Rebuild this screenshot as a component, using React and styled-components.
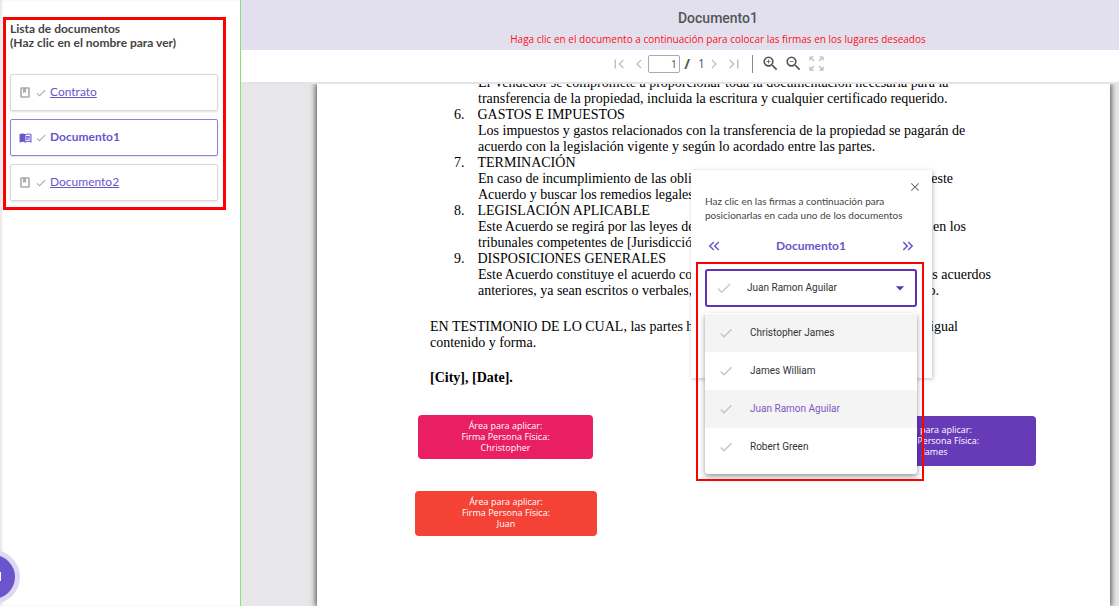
import React from "react";
import styled, { createGlobalStyle } from "styled-components";
import {
  MdFirstPage, MdLastPage, MdChevronLeft, MdChevronRight, MdZoomIn, MdZoomOut,
  MdZoomOutMap, MdCheck, MdClose, MdArrowDropDown, MdKeyboardDoubleArrowLeft,
  MdKeyboardDoubleArrowRight, MdMenuBook,
} from "react-icons/md";

const accent = "#6a55cc";
const deep = "#5e35b1";

const GlobalStyle = createGlobalStyle`
  * { box-sizing: border-box; }
  body { margin: 0; background: #fff; font-family: Lato, "Open Sans", sans-serif; color: #444; }
  button { border: 0; padding: 0; background: none; font: inherit; color: inherit; cursor: pointer; display: flex; align-items: center; justify-content: center; }
  svg { display: block; flex: none; }
`;

const Shell = styled.div`
  display: flex;
  height: 100vh;
  overflow: hidden;
`;

const Sidebar = styled.aside`
  flex: none;
  width: 241px;
  padding: 17px 14px 0 3px;
  border-right: 1px solid #86e07c;
  box-shadow: inset 2px 0 2px #e8e8e8;
`;

const ListFrame = styled.section`
  border: 3px solid #f00;
  padding: 2px 5px 6px 4px;
`;

const ListTitle = styled.h2`
  margin: 0 0 24px;
  font-size: 12px;
  line-height: 14px;
  font-weight: 700;
`;

const DocList = styled.ul`
  list-style: none;
  margin: 0;
  padding: 0;
  display: grid;
  gap: 8px;
`;

const DocCard = styled.li`
  display: flex;
  align-items: center;
  height: 37px;
  padding: 0 8px 2px;
  border: 1px solid ${(p) => (p.$active ? "#8f7fdc" : "#d8d8d8")};
  border-radius: 2px;
  box-shadow: 0 1px 2px rgba(0, 0, 0, 0.12);
  color: ${(p) => (p.$active ? accent : "#aaa")};
`;

const IconSlot = styled.span`
  display: flex;
  justify-content: center;
  width: 12px;
  padding-top: 2px;
`;

const Tick = styled(MdCheck)`
  color: #aaa;
  margin: 2px 3px 0 4px;
`;

const DocLink = styled.a`
  font-size: 12px;
  line-height: 16px;
  color: ${accent};
  font-weight: ${(p) => (p.$active ? 700 : 400)};
  text-decoration: ${(p) => (p.$active ? "none" : "underline")};
`;

const Main = styled.main`
  flex: 1;
  min-width: 0;
  display: flex;
  flex-direction: column;
`;

const Header = styled.header`
  height: 50px;
  padding: 9px 0 0 76px;
  background: #e2e0ef;
  text-align: center;
  font-family: "Open Sans", sans-serif;
  flex: none;
`;

const Title = styled.h1`
  margin: 0 0 4px;
  font: 500 14px/18px Roboto, sans-serif;
  color: #555;
`;

const Notice = styled.p`
  margin: 0;
  font-size: 10px;
  line-height: 16px;
  color: #ff1010;
`;

const Toolbar = styled.div`
  flex: none;
  display: flex;
  align-items: center;
  justify-content: center;
  height: 34px;
  padding: 0 0 5px 76px;
  background: #fff;
  border-bottom: 2px solid #e4e4e6;
  font-family: "Open Sans", sans-serif;
  font-size: 12px;
  color: #555;
`;

const ToolGroup = styled.div`
  display: flex;
  gap: ${(p) => p.$gap}px;
`;

const ToolButton = styled.button`
  width: 18px;
  height: 18px;
  && { color: ${(p) => (p.$dim ? "#c4c4c4" : "#555")}; }
`;

const PageInput = styled.input`
  width: 32px;
  height: 18px;
  padding: 0 2px;
  border: 1px solid #aaa;
  border-radius: 2px;
  font: inherit;
  font-size: 11px;
  color: #555;
  text-align: right;
`;

const Slash = styled.span`
  margin: 0 8px 0 4px;
  font-size: 14px;
  font-weight: 700;
`;

const Divider = styled.span`
  width: 1px;
  height: 18px;
  margin: 0 9px;
  background: #888;
`;

const Viewer = styled.div`
  flex: 1;
  min-height: 0;
  display: flex;
  overflow: hidden;
  padding: 0 9px 0 76px;
  background: #e7e7e9;
`;

const Sheet = styled.article`
  position: relative;
  flex: 1;
  min-width: 793px;
  padding-left: 113px;
  background: #fff;
  box-shadow: 0 0 6px 1px rgba(0, 0, 0, 0.7);
  font-family: "Liberation Serif", "Times New Roman", serif;
  font-size: 14px;
  line-height: 16px;
  color: #000;
`;

const Clauses = styled.ol`
  margin: -9px 0 20px;
  padding-left: 48px;
  list-style: none;
`;

const ClauseHead = styled.div`
  display: flex;
  margin-left: -24px;
  gap: 13px;
`;

const Line = styled.div`
  display: flex;
  justify-content: space-between;
  width: ${(p) => (p.$w ? `${p.$w}px` : "auto")};
  white-space: nowrap;
`;

const Paragraph = styled.div`
  margin-bottom: 19px;
  font-weight: ${(p) => (p.$bold ? 700 : 400)};
`;

const Stamp = styled.div`
  position: absolute;
  left: ${(p) => p.$x}px;
  top: ${(p) => p.$y}px;
  width: ${(p) => p.$w}px;
  height: ${(p) => p.$h}px;
  padding-bottom: 2px;
  display: flex;
  align-items: center;
  justify-content: center;
  text-align: center;
  white-space: pre-line;
  border-radius: 4px;
  background: ${(p) => p.$color};
  color: #fff;
  font: 9px/11px "Open Sans", sans-serif;
`;

const Dialog = styled.section`
  position: absolute;
  left: 374px;
  top: 86px;
  width: 241px;
  height: 208px;
  padding: 10px 15px 0 14px;
  background: #fff;
  box-shadow: 1px 1px 4px rgba(0, 0, 0, 0.25);
  font-family: Lato, sans-serif;
  color: #444;
`;

const CloseRow = styled.div`
  display: flex;
  justify-content: flex-end;
  margin-right: -5px;
  color: #777;
`;

const Help = styled.p`
  margin: 0 0 16px;
  font-size: 10px;
  line-height: 14px;
  white-space: pre-line;
`;

const Switcher = styled.div`
  display: flex;
  align-items: center;
  justify-content: space-between;
  height: 16px;
  margin-bottom: 15px;
  font-size: 12px;
  font-weight: 700;
  color: ${accent};
`;

const Field = styled.div`
  position: relative;
  display: flex;
  align-items: center;
  font-family: Roboto, sans-serif;
  font-size: 10px;
`;

const Select = styled.select`
  appearance: none;
  width: 100%;
  height: 38px;
  padding: 0 24px 0 40px;
  border: 2px solid ${deep};
  border-radius: 3px;
  background: #fff;
  color: #333;
  font: inherit;
`;

const FieldIcon = styled.span`
  position: absolute;
  pointer-events: none;
  ${(p) => (p.$right ? "right: 7px; color: #5e35b1;" : "left: 10px; color: #ccc;")}
`;

const Menu = styled.ul`
  position: absolute;
  top: 44px;
  left: 0;
  right: 0;
  margin: 0;
  padding: 1px 0 8px;
  list-style: none;
  background: #fff;
  border-radius: 0 0 3px 3px;
  box-shadow: 0 2px 4px rgba(0, 0, 0, 0.3), 0 4px 8px rgba(0, 0, 0, 0.14);
`;

const Option = styled.li`
  display: flex;
  align-items: center;
  gap: 16px;
  height: 38px;
  padding-left: 13px;
  background: ${(p) => (p.$shade ? "#f4f4f4" : "#fff")};
  color: ${(p) => (p.$selected ? "#7e57c2" : "#333")};
  svg { color: #c4c4c4; }
`;

const Highlight = styled.div`
  position: absolute;
  top: -7px;
  left: -9px;
  right: -7px;
  height: 219px;
  border: 2px solid #f00;
  pointer-events: none;
`;

const Chat = styled.button`
  position: fixed;
  left: -34px;
  bottom: 2px;
  width: 54px;
  height: 54px;
  && {
    border: 5px solid #ddd8f3;
    border-radius: 50%;
    background: ${accent};
  }
`;

const people = ["Christopher James", "James William", "Juan Ramon Aguilar", "Robert Green"];

// Each line is [start, end, width]; the end part is set flush with the line's width.
const opening = [
  ["El Vendedor se compromete a proporcionar toda la documentación necesaria para la"],
  ["transferencia de la propiedad, incluida la escritura y cualquier certificado requerido."],
];

const clauses = [
  [6, "GASTOS E IMPUESTOS", [
    ["Los impuestos y gastos relacionados con la transferencia de la propiedad se pagarán de"],
    ["acuerdo con la legislación vigente y según lo acordado entre las partes."],
  ]],
  [7, "TERMINACIÓN", [
    ["En caso de incumplimiento de las obli", "este", 475],
    ["Acuerdo y buscar los remedios legales"],
  ]],
  [8, "LEGISLACIÓN APLICABLE", [
    ["Este Acuerdo se regirá por las leyes de", "en los", 488],
    ["tribunales competentes de [Jurisdicción]"],
  ]],
  [9, "DISPOSICIONES GENERALES", [
    ["Este Acuerdo constituye el acuerdo co", "los acuerdos", 513],
    ["anteriores, ya sean escritos o verbales,", "o.", 461],
  ]],
];

const closing = [
  ["EN TESTIMONIO DE LO CUAL, las partes h", "igual", 528],
  ["contenido y forma."],
];

const Lines = ({ items }) =>
  items.map(([start, end, width]) => (
    <Line key={start} $w={width}>
      <span>{start}</span>
      {end && <span>{end}</span>}
    </Line>
  ));

const BookmarkPage = () => (
  <svg width="10" height="11" viewBox="0 0 10 11" fill="none" stroke="currentColor">
    <rect x="1" y="1" width="8" height="9" rx="0.500" strokeWidth="1.6" />
    <path d="M3 1h3v5L4.500 5 3 6z" fill="currentColor" stroke="none" />
  </svg>
);

export default function App() {
  return (
    <>
      <GlobalStyle />
      <Shell>
        <Sidebar>
          <ListFrame>
            <ListTitle>Lista de documentos<br />(Haz clic en el nombre para ver)</ListTitle>
            <DocList>
              {["Contrato", "Documento1", "Documento2"].map((name) => {
                const active = name === "Documento1";
                return (
                  <DocCard key={name} $active={active}>
                    <IconSlot>{active ? <MdMenuBook size={13} /> : <BookmarkPage />}</IconSlot>
                    <Tick size={12} />
                    <DocLink href="#" $active={active}>{name}</DocLink>
                  </DocCard>
                );
              })}
            </DocList>
          </ListFrame>
        </Sidebar>
        <Main>
          <Header>
            <Title>Documento1</Title>
            <Notice>Haga clic en el documento a continuación para colocar las firmas en los lugares deseados</Notice>
          </Header>
          <Toolbar>
            <ToolGroup $gap={2}>
              <ToolButton $dim aria-label="Primera página"><MdFirstPage size={18} /></ToolButton>
              <ToolButton $dim aria-label="Página anterior"><MdChevronLeft size={18} /></ToolButton>
            </ToolGroup>
            <PageInput aria-label="Página" defaultValue="1" />
            <Slash>/</Slash>
            <span>1</span>
            <ToolGroup $gap={2}>
              <ToolButton $dim aria-label="Página siguiente"><MdChevronRight size={18} /></ToolButton>
              <ToolButton $dim aria-label="Última página"><MdLastPage size={18} /></ToolButton>
            </ToolGroup>
            <Divider />
            <ToolGroup $gap={5}>
              <ToolButton aria-label="Acercar"><MdZoomIn size={19} /></ToolButton>
              <ToolButton aria-label="Alejar"><MdZoomOut size={19} /></ToolButton>
              <ToolButton $dim aria-label="Pantalla completa"><MdZoomOutMap size={19} /></ToolButton>
            </ToolGroup>
          </Toolbar>
          <Viewer>
            <Sheet>
              <Clauses>
                <li><Lines items={opening} /></li>
                {clauses.map(([n, head, body]) => (
                  <li key={n}>
                    <ClauseHead><span>{n}.</span><span>{head}</span></ClauseHead>
                    <Lines items={body} />
                  </li>
                ))}
              </Clauses>
              <Paragraph><Lines items={closing} /></Paragraph>
              <Paragraph $bold>[City], [Date].</Paragraph>
              <Stamp $x={101} $y={331} $w={175} $h={44} $color="#e91e63">{"Área para aplicar:\nFirma Persona Física:\nChristopher"}</Stamp>
              <Stamp $x={98} $y={407} $w={182} $h={45} $color="#f44336">{"Área para aplicar:\nFirma Persona Física:\nJuan"}</Stamp>
              <Stamp $x={517} $y={332} $w={202} $h={50} $color="#673ab7">{"Área para aplicar:\nFirma Persona Física:\nJames"}</Stamp>
              <Dialog>
                <CloseRow><button aria-label="Cerrar"><MdClose size={14} /></button></CloseRow>
                <Help>{"Haz clic en las firmas a continuación para\nposicionarlas en cada uno de los documentos"}</Help>
                <Switcher>
                  <button aria-label="Documento anterior"><MdKeyboardDoubleArrowLeft size={18} /></button>
                  <span>Documento1</span>
                  <button aria-label="Documento siguiente"><MdKeyboardDoubleArrowRight size={18} /></button>
                </Switcher>
                <Field>
                  <Select aria-label="Firmante" defaultValue={people[2]}>
                    {people.map((p) => <option key={p}>{p}</option>)}
                  </Select>
                  <FieldIcon><MdCheck size={18} /></FieldIcon>
                  <FieldIcon $right><MdArrowDropDown size={20} /></FieldIcon>
                  <Menu role="listbox" aria-label="Firmantes">
                    {people.map((p, i) => (
                      <Option key={p} role="option" aria-selected={i === 2} $shade={i % 2 === 0} $selected={i === 2}>
                        <MdCheck size={16} />{p}
                      </Option>
                    ))}
                  </Menu>
                  <Highlight />
                </Field>
              </Dialog>
            </Sheet>
          </Viewer>
        </Main>
      </Shell>
      <Chat aria-label="Chat">
        <svg width="20" height="14" viewBox="0 0 20 14"><path d="M1 2h17v9H8l-3 2v-2H1z" fill="#fff" /></svg>
      </Chat>
    </>
  );
}
